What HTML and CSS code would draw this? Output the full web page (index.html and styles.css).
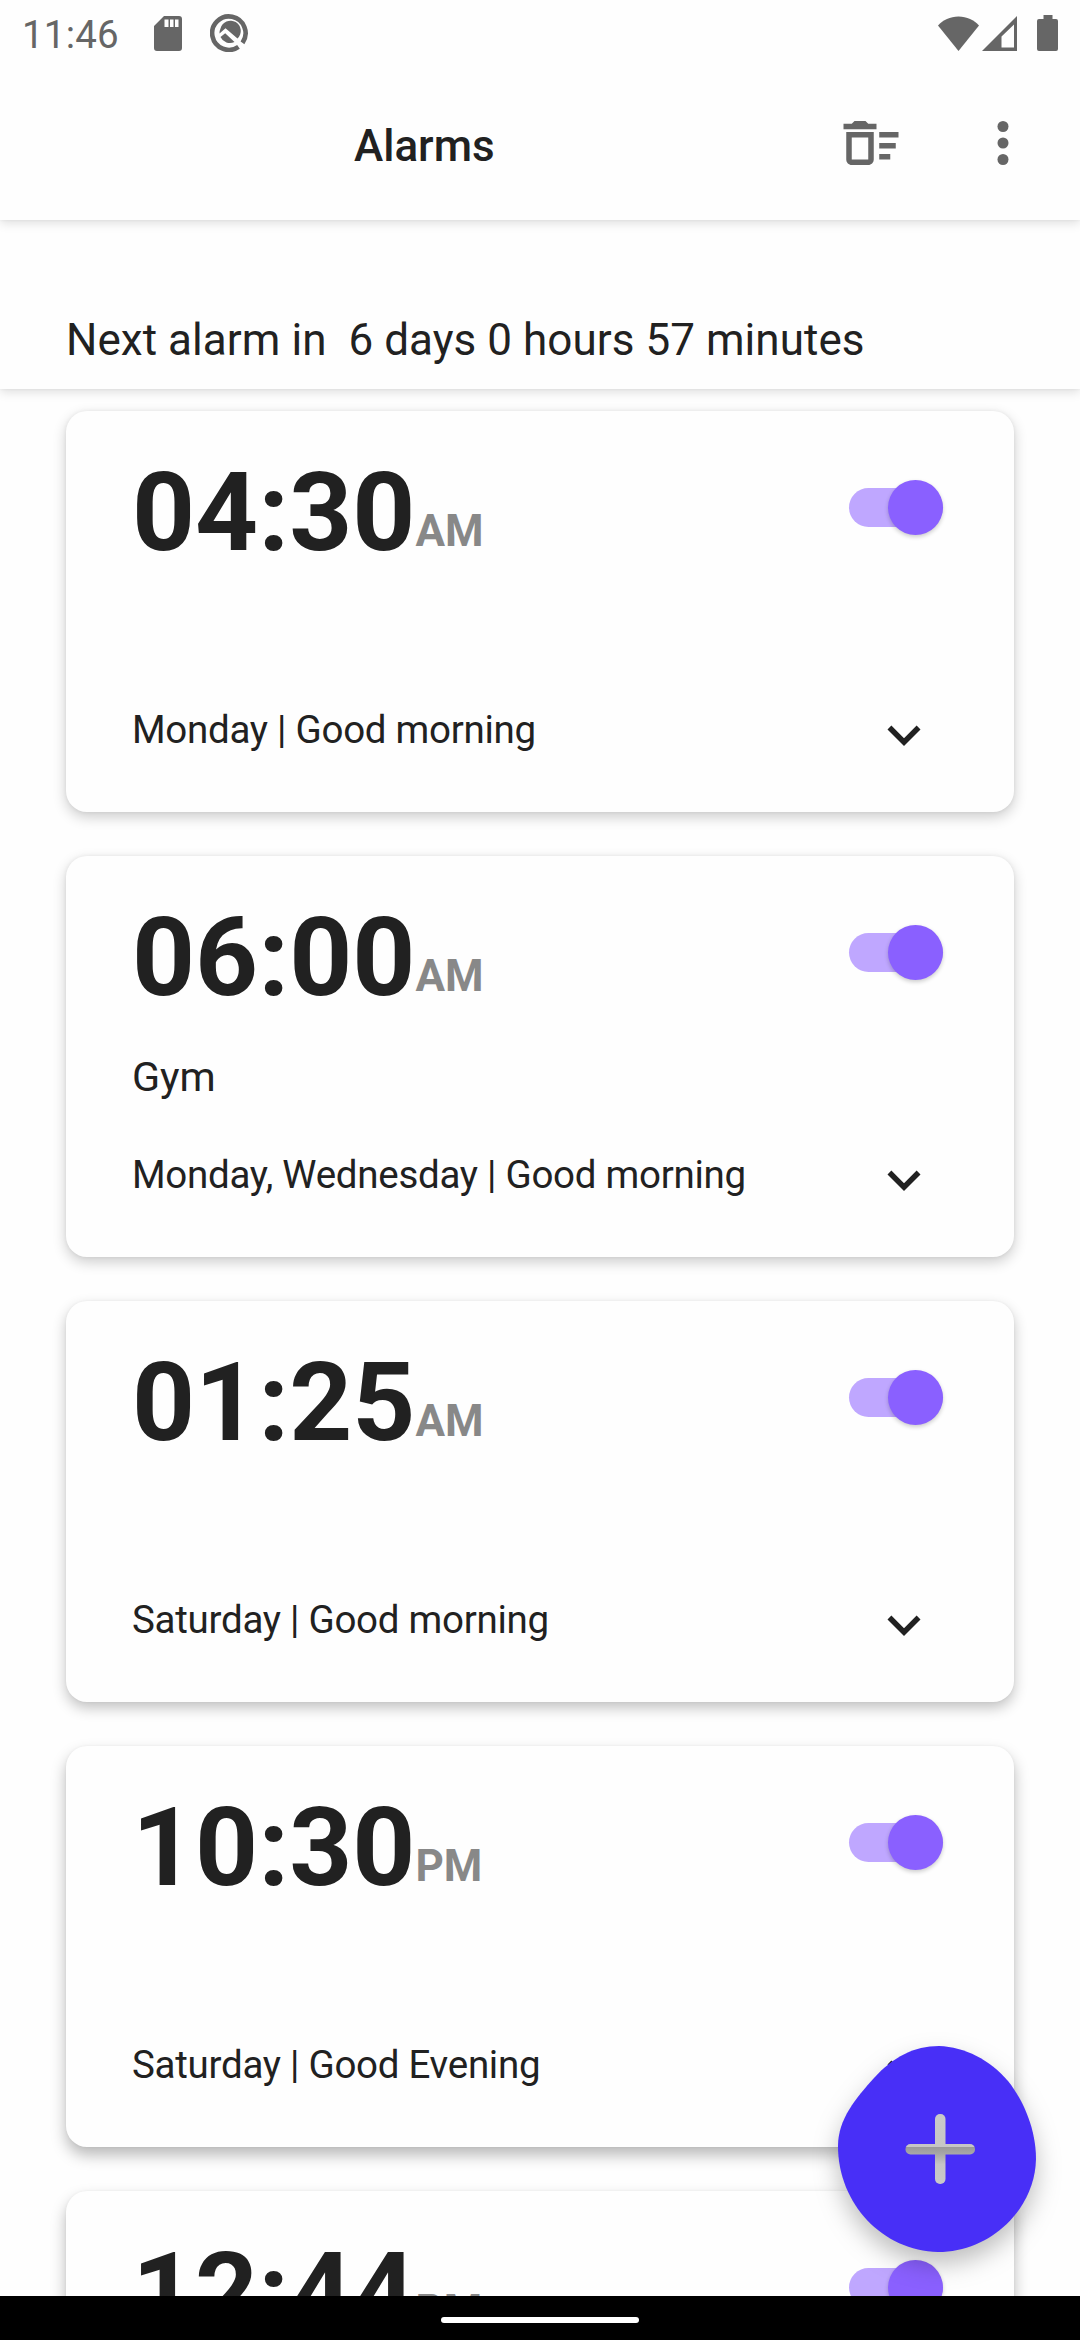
FILE: index.html
```html
<!DOCTYPE html>
<html lang="en">

<head>
  <meta charset="UTF-8">
  <title>Alarms</title>
  <link rel="stylesheet" href="styles.css">
</head>

<body>
  <div class="screen">
    <div class="status">
      <span class="clock">11:46</span>
      <svg class="sd" viewBox="0 0 28 35"><path fill-rule="evenodd" d="M10 0h15a3 3 0 0 1 3 3v29a3 3 0 0 1-3 3H3a3 3 0 0 1-3-3V10zM10.500 3.500v7.500h4v-7.500zM16 3.500v7.500h3.500v-7.500zM21 3.500v7.500h3.500v-7.500z"/></svg>
      <svg class="q" viewBox="0 0 38 38"><path class="ring" d="M28.500 32.800A16.700 16.700 0 1 1 32.500 28.800"/><path d="M10.500 14.500A10.300 10.300 0 1 1 27.500 24.500L15.500 14.200 9.500 19.600A10 10 0 0 1 10.500 14.500zM10.500 23L15.200 19.300 24.500 28A10.300 10.300 0 0 1 10.500 23z"/></svg>
      <svg class="wifi" viewBox="0 0 41 35"><path d="M20.500 35L0 9.500C5 4 12 .5 20.500.5S36 4 41 9.500z"/></svg>
      <svg class="signal" viewBox="0 0 35 35"><path fill-rule="evenodd" d="M35 0v35H0zM32 8.500L19.500 20.500V31.500H32z"/></svg>
      <svg class="battery" viewBox="0 0 21 36"><path d="M6.500 0h9v4H19a2 2 0 0 1 2 2v28a2 2 0 0 1-2 2H2a2 2 0 0 1-2-2V6a2 2 0 0 1 2-2h4.500z"/></svg>
    </div>
    <div class="header">
      <h1>Alarms</h1>
      <svg class="icon" viewBox="0 0 24 24"><path d="M15 16h4v2h-4zm0-8h7v2h-7zm0 4h6v2h-6zM3 18c0 1.100.9 2 2 2h6c1.100 0 2-.9 2-2V8H3v10zm2-8h6v8H5v-8zm5-6H6L5 5H2v2h12V5h-3z"/></svg>
      <svg class="icon" viewBox="0 0 24 24"><circle cx="12" cy="6" r="2"/><circle cx="12" cy="12" r="2"/><circle cx="12" cy="18" r="2"/></svg>
    </div>
    <div class="next">Next alarm in&nbsp; 6 days 0 hours 57 minutes</div>

    <div class="list">
      <div class="card">
        <div class="row">
          <div class="time">04:30<span>AM</span></div>
          <div class="switch"><i></i></div>
        </div>
        <div class="label"></div>
        <div class="row">
          <div class="days">Monday | Good morning</div>
          <svg class="more" viewBox="0 0 24 24"><path d="M16.590 8.590L12 13.170 7.410 8.590 6 10l6 6 6-6z"/></svg>
        </div>
      </div>
      <div class="card">
        <div class="row">
          <div class="time">06:00<span>AM</span></div>
          <div class="switch"><i></i></div>
        </div>
        <div class="label">Gym</div>
        <div class="row">
          <div class="days">Monday, Wednesday | Good morning</div>
          <svg class="more" viewBox="0 0 24 24"><path d="M16.590 8.590L12 13.170 7.410 8.590 6 10l6 6 6-6z"/></svg>
        </div>
      </div>
      <div class="card low">
        <div class="row">
          <div class="time">01:25<span>AM</span></div>
          <div class="switch"><i></i></div>
        </div>
        <div class="label"></div>
        <div class="row">
          <div class="days">Saturday | Good morning</div>
          <svg class="more" viewBox="0 0 24 24"><path d="M16.590 8.590L12 13.170 7.410 8.590 6 10l6 6 6-6z"/></svg>
        </div>
      </div>
      <div class="card lowest">
        <div class="row">
          <div class="time">10:30<span>PM</span></div>
          <div class="switch"><i></i></div>
        </div>
        <div class="label"></div>
        <div class="row">
          <div class="days">Saturday | Good Evening</div>
          <svg class="more" viewBox="0 0 24 24"><path d="M16.590 8.590L12 13.170 7.410 8.590 6 10l6 6 6-6z"/></svg>
        </div>
      </div>
      <div class="card lowest">
        <div class="row">
          <div class="time">12:44<span>PM</span></div>
          <div class="switch"><i></i></div>
        </div>
      </div>
    </div>

    <div class="navbar"><div class="pill"></div></div>

    <!-- add button -->
    <svg class="fab" viewBox="0 0 198 206">
      <defs>
        <linearGradient id="shade" gradientUnits="userSpaceOnUse" x1="0" y1="68" x2="0" y2="138">
          <stop offset="0" stop-color="#c9c9c9"/>
          <stop offset=".47" stop-color="#c6c6c6"/>
          <stop offset=".47" stop-color="#999"/>
          <stop offset=".56" stop-color="#a6a6a6"/>
          <stop offset=".72" stop-color="#c6c6c6"/>
          <stop offset="1" stop-color="#c9c9c9"/>
        </linearGradient>
      </defs>
      <path class="blob" d="M101 0C127 1 152 14 170 35C186 55 198 84 198 113C197 163 153 206 100 206C45 205 0 158 0 100C0 73 18 52 36 32C55 11 76 0 101 0z"/>
      <rect x="97" y="68" width="10.500" height="70" rx="5" fill="url(#shade)"/>
      <rect x="67.500" y="98" width="69.500" height="10.500" rx="5" fill="url(#shade)"/>
    </svg>
  </div>
</body>

</html>
```

FILE: styles.css
```css
* {
  margin: 0;
  padding: 0;
  box-sizing: border-box;
}

body {
  background: #fefefe;
  font-family: Roboto, "Liberation Sans", sans-serif;
  color: #212121;
}

svg {
  display: block;
  flex: none;
  fill: #666;
}

.screen {
  position: relative;
  display: flex;
  flex-direction: column;
  width: 1080px;
  height: 2340px;
  overflow: hidden;
}

.status {
  display: flex;
  align-items: center;
  height: 66px;
  padding: 0 22px;
  background: #fefefe;
  z-index: 3;
}

.clock {
  width: 132px;
  padding-top: 3px;
  font-size: 38.5px;
  line-height: 63px;
  letter-spacing: 0.2px;
  color: #666;
}

.sd {
  width: 28px;
  height: 35px;
}

.q {
  width: 38px;
  height: 38px;
  margin-left: 28px;
}

.q .ring {
  fill: none;
  stroke: #666;
  stroke-width: 4.6;
}

.wifi {
  width: 41px;
  height: 35px;
  margin-left: auto;
}

.signal {
  width: 35px;
  height: 35px;
  margin-left: 3px;
}

.battery {
  width: 21px;
  height: 36px;
  margin-left: 20px;
}

.header {
  display: flex;
  align-items: center;
  height: 154px;
  padding: 0 44px 0 354px;
  background: #fefefe;
  box-shadow: 0 3px 10px rgba(0, 0, 0, 0.13), 0 0 3px rgba(0, 0, 0, 0.06);
  z-index: 2;
}

.header h1 {
  flex: 1;
  padding-top: 6px;
  font-size: 44px;
  font-weight: 500;
  line-height: 52px;
}

.icon {
  width: 66px;
  height: 66px;
  margin-left: 66px;
}

.next {
  height: 169px;
  padding: 94px 66px 0;
  font-size: 44px;
  line-height: 52px;
  letter-spacing: 0.05px;
  background: #fefefe;
  box-shadow: 0 3px 10px rgba(0, 0, 0, 0.13), 0 0 3px rgba(0, 0, 0, 0.06);
  z-index: 1;
}

.list {
  display: flex;
  flex: 1;
  flex-direction: column;
  gap: 44px;
  min-height: 0;
  padding: 22px 66px 0;
  overflow: hidden;
}

.card {
  flex: none;
  height: 401px;
  padding: 38px 66px 0;
  border-radius: 21px;
  background: #fefefe;
  box-shadow: 0 5px 14px rgba(0, 0, 0, 0.2), 0 0 4px rgba(0, 0, 0, 0.06);
}

.card.low {
  box-shadow: 0 6px 14px rgba(0, 0, 0, 0.24), 0 0 3px rgba(0, 0, 0, 0.05);
}

.card.lowest {
  box-shadow: 0 8px 15px rgba(0, 0, 0, 0.28), 0 0 3px rgba(0, 0, 0, 0.05);
}

.row {
  display: flex;
  justify-content: space-between;
}

.time {
  display: flex;
  align-items: baseline;
  font-size: 110px;
  font-weight: 700;
  line-height: 128px;
}

.time span {
  font-size: 44px;
  line-height: 52px;
  color: #888;
  transform: translateY(-4px);
}

.switch {
  width: 94px;
  height: 39px;
  margin: 39px 5px 0 0;
  border-radius: 20px;
  background: #bfa7ff;
}

.switch i {
  display: block;
  width: 55px;
  height: 55px;
  margin: -8px 0 0 auto;
  border-radius: 50%;
  background: #8a60ff;
  box-shadow: 0 2px 4px rgba(0, 0, 0, 0.2);
}

.label {
  height: 125px;
  padding-top: 32px;
  font-size: 41.25px;
  line-height: 46px;
}

.days {
  padding-top: 5px;
  font-size: 38.5px;
  line-height: 46px;
  letter-spacing: -0.27px;
}

.more {
  width: 66px;
  height: 66px;
  margin-right: 11px;
  fill: #212121;
}

.navbar {
  height: 44px;
  padding-top: 21px;
  background: #000;
  z-index: 1;
}

.pill {
  width: 198px;
  height: 6px;
  margin: 0 auto;
  border-radius: 3px;
  background: #fff;
}

.fab {
  position: absolute;
  top: 2046px;
  left: 838px;
  width: 198px;
  height: 206px;
  overflow: visible;
}

.fab .blob {
  fill: #482ff7;
  filter: drop-shadow(0 12px 12px rgba(0, 0, 0, 0.25));
}
```
